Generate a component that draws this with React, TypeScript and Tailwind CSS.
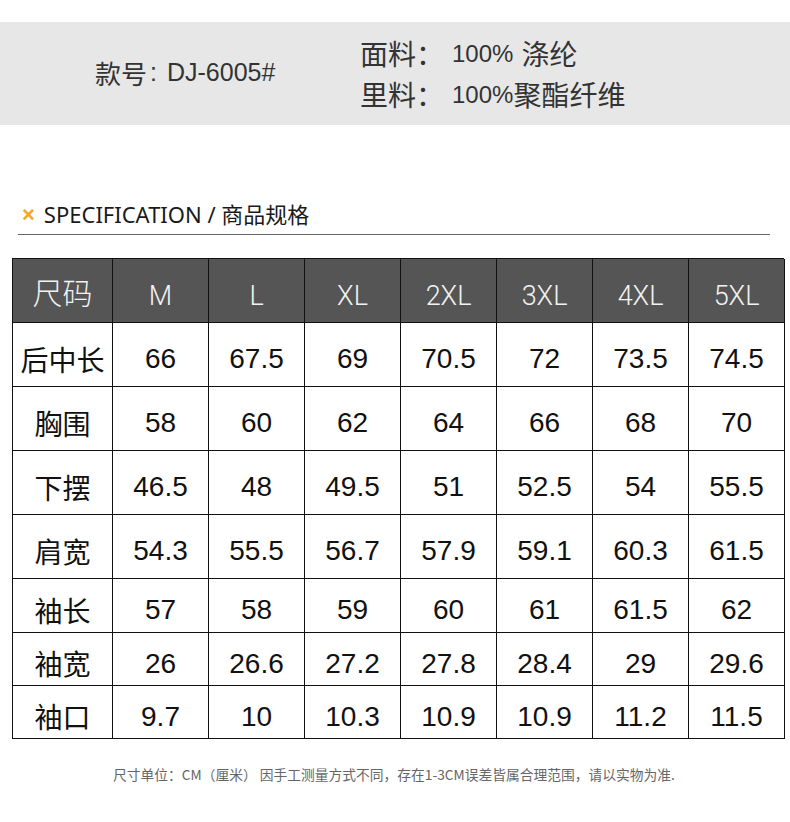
import React from "react";

const sizes = ["M", "L", "XL", "2XL", "3XL", "4XL", "5XL"];
const rows: { label: string; vals: string[]; h: string }[] = [
  { label: "后中长", vals: ["66", "67.5", "69", "70.5", "72", "73.5", "74.5"], h: "h-[64px]" },
  { label: "胸围", vals: ["58", "60", "62", "64", "66", "68", "70"], h: "h-[64px]" },
  { label: "下摆", vals: ["46.5", "48", "49.5", "51", "52.5", "54", "55.5"], h: "h-[64px]" },
  { label: "肩宽", vals: ["54.3", "55.5", "56.7", "57.9", "59.1", "60.3", "61.5"], h: "h-[64px]" },
  { label: "袖长", vals: ["57", "58", "59", "60", "61", "61.5", "62"], h: "h-[54px]" },
  { label: "袖宽", vals: ["26", "26.6", "27.2", "27.8", "28.4", "29", "29.6"], h: "h-[53px]" },
  { label: "袖口", vals: ["9.7", "10", "10.3", "10.9", "10.9", "11.2", "11.5"], h: "h-[53px]" },
];

const cjk = "font-['Noto_Sans_CJK_SC',sans-serif]";
const num = "font-['Liberation_Sans','Noto_Sans_CJK_SC',sans-serif]";

export default function App() {
  return (
    <div className="w-[790px] h-[822px] bg-white overflow-hidden">
      <div className="h-[22px]" />
      <div className="h-[103px] bg-[#e7e7e7] flex items-center text-[#333]">
        <div className={`ml-[95px] w-[265px] flex items-center text-[26px] ${cjk} pb-[2px]`}>
          <span>款号</span>
          <span className={`${num} text-[25px] ml-[3px]`}>:</span>
          <span className={`${num} text-[25px] ml-[10px]`}>DJ-6005#</span>
        </div>
        <div className={`flex flex-col text-[28px] leading-[41px] ${cjk} pt-[1px]`}>
          <div className="flex items-center">
            <span>面料：</span>
            <span className={`${num} text-[24px] ml-[8px]`}>100%</span>
            <span className="ml-[8px]">涤纶</span>
          </div>
          <div className="flex items-center">
            <span>里料：</span>
            <span className={`${num} text-[24px] ml-[8px]`}>100%</span>
            <span>聚酯纤维</span>
          </div>
        </div>
      </div>

      <div className="h-[74px]" />
      <div className="ml-[18px] w-[752px] h-[30px] flex items-center">
        <span className="text-[#f5a623] text-[22px] font-bold ml-[4px] mr-[9px] font-['Liberation_Sans',sans-serif]">×</span>
        <span className={`text-[22px] text-[#1a1a1a] font-['Noto_Sans','Noto_Sans_CJK_SC',sans-serif]`}>
          SPECIFICATION / 商品规格
        </span>
      </div>
      <div className="h-[5px]" />
      <div className="ml-[18px] w-[752px] h-px bg-[#666]" />

      <div className="h-[23px]" />
      <div className="ml-[12px] w-[772px] border-l border-t border-[#111]">
        <div className="grid grid-cols-[100px_repeat(7,96px)] h-[64px] bg-[#555] text-[#f2f2f2]">
          <div className={`flex items-center justify-center pt-[2px] border-r border-b border-[#111] text-[30px] font-light ${cjk}`}>
            尺码
          </div>
          {sizes.map((s) => (
            <div
              key={s}
              className="flex items-center justify-center pt-[12px] border-r border-b border-[#111] text-[27px] font-light font-['Roboto',sans-serif]"
            >
              {s}
            </div>
          ))}
        </div>
        {rows.map((r) => (
          <div key={r.label} className={`grid grid-cols-[100px_repeat(7,96px)] ${r.h} text-[#111]`}>
            <div className={`flex items-center justify-center pt-[8px] border-r border-b border-[#111] text-[28px] ${cjk}`}>
              {r.label}
            </div>
            {r.vals.map((v, i) => (
              <div
                key={i}
                className={`flex items-center justify-center pt-[9px] border-r border-b border-[#111] text-[28px] ${num}`}
              >
                {v}
              </div>
            ))}
          </div>
        ))}
      </div>

      <div className="h-[25px]" />
      <div className={`ml-[113px] text-[13.75px] text-[#666] leading-[20px] ${cjk} whitespace-nowrap`}>
        尺寸单位：CM（厘米） 因手工测量方式不同，存在1-3CM误差皆属合理范围，请以实物为准.
      </div>
    </div>
  );
}
